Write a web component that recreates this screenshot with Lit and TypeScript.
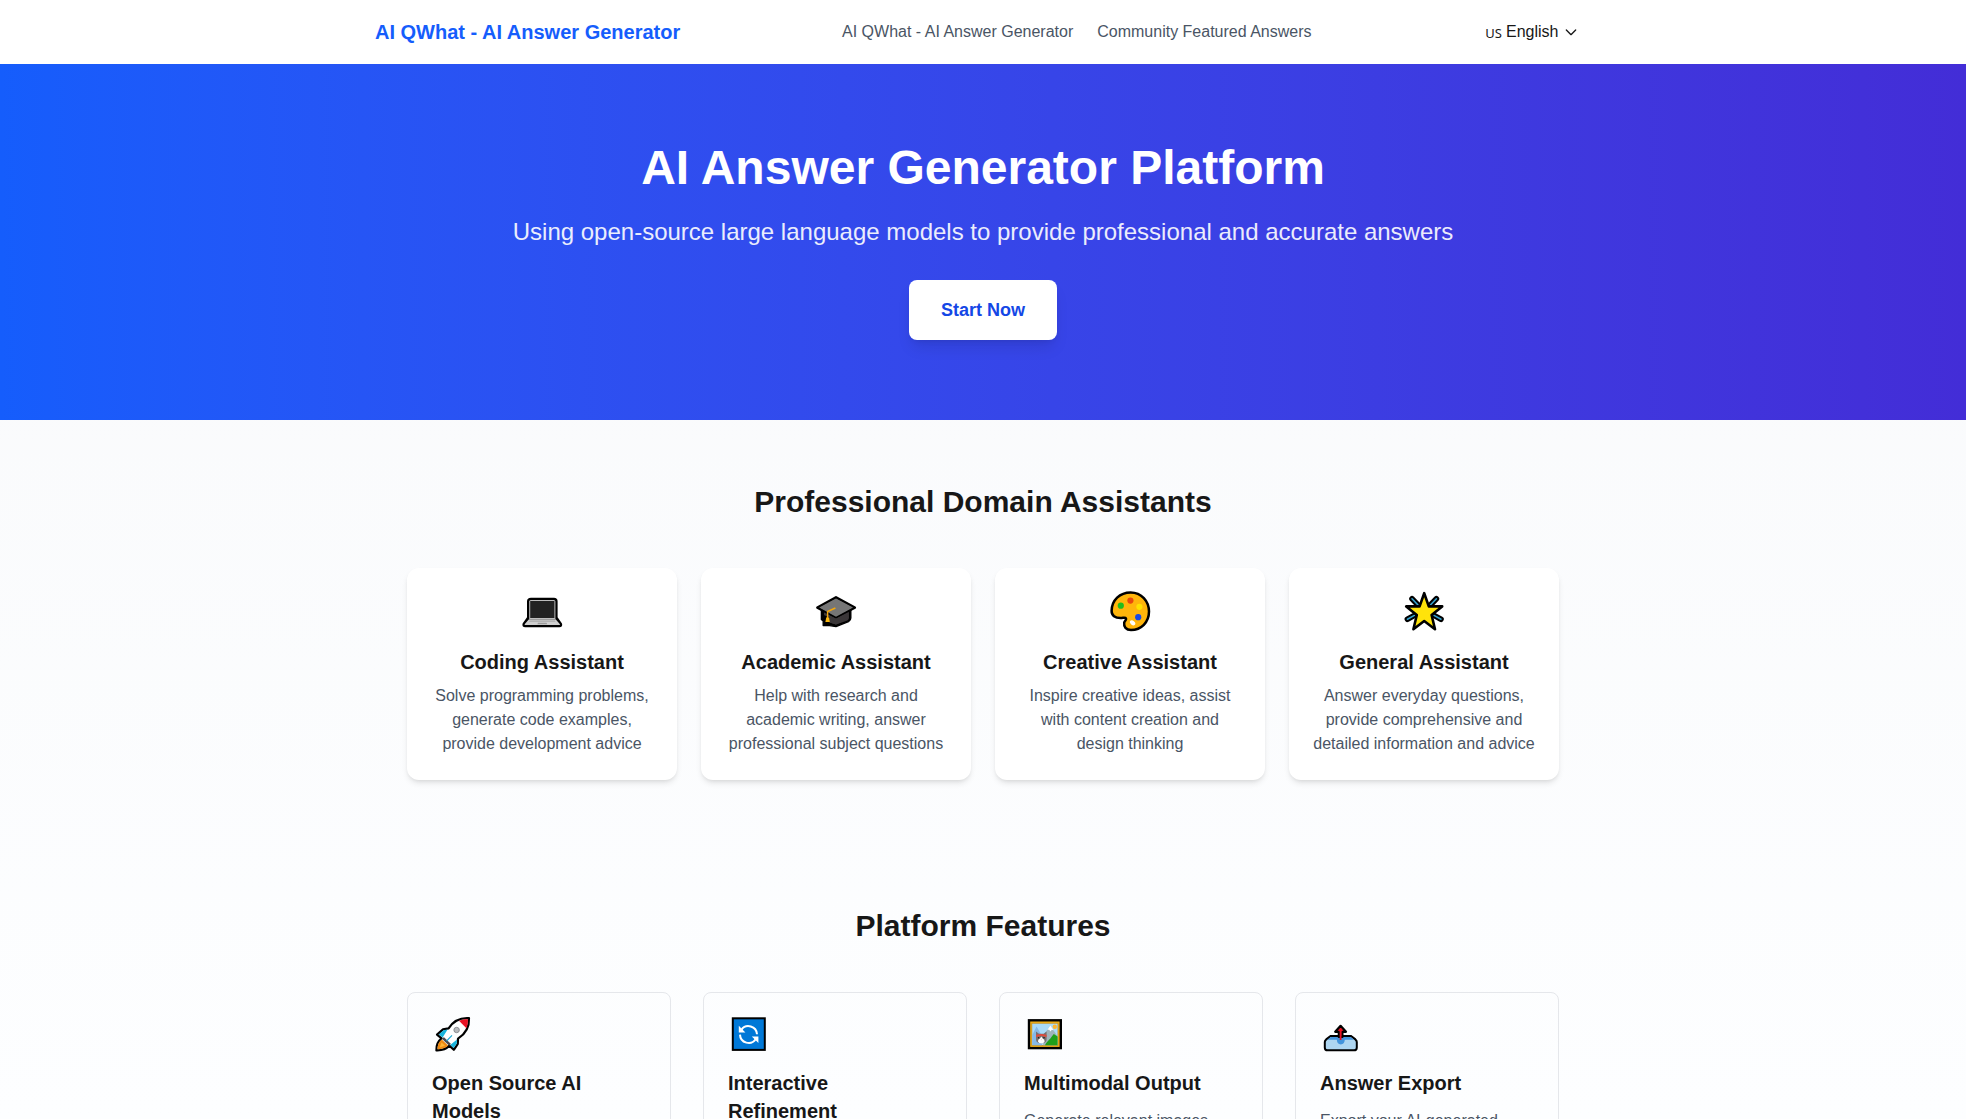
import { LitElement, html, svg, css, SVGTemplateResult } from "lit";
import { customElement } from "lit/decorators.js";

interface Item {
  icon: SVGTemplateResult;
  title: string;
  text?: string;
}

const laptop = svg`
  <path d="M13 5.7H36Q39.6 5.7 39.6 9.3V25.2L44 31.6Q45 35.3 41.4 35.3H7.2Q3.6 35.3 4.6 31.6L9 25.2V9.3Q9 5.7 13 5.7Z" fill="#000"/>
  <path d="M11.2 27V9.6Q11.2 8 12.8 8H35.8Q37.4 8 37.4 9.6V27Z" fill="#bdbdbd"/>
  <path d="M12.2 9H36.4V26H12.2Z" fill="#222"/>
  <path d="M11 27.2H37.6L42 32.2Q42.2 33 41.4 33H7.2Q6.4 33 6.6 32.2Z" fill="#cfcfcf"/>
  <path d="M11.8 28.4H36.8L37.6 29.8H11Z" fill="#a9a9a9"/>
  <path d="M20 30.8H28.6L29.2 32.2H19.4Z" fill="#9b9b9b"/>`;

const cap = svg`
  <path d="M9.4 18V27.5L11.2 29V33.6H17.5L24 34.6L36.5 29.6Q38.8 28.4 38.8 26V18Z" fill="#000" stroke="#000" stroke-width="1.4" stroke-linejoin="round"/>
  <path d="M12 20L24 26L36.8 19.6V26.2Q36.8 27.6 35.4 28.4L24 32.6L17.6 30.6V25L12 23Z" fill="#3a3638"/>
  <path d="M24 5.4L42.8 15.6L24 25.4L5.4 15.6Z" fill="#767676" stroke="#000" stroke-width="2.6" stroke-linejoin="round"/>
  <path d="M12 20.400L24 26.400L36.800 20V26.200L24 32.400L17.600 30.600V25L12 23Z" fill="#3a3638"/>
  <path d="M24 6.600L41 15.600L24 24.800L7.200 15.600Z" fill="#767676"/>
  <path d="M23.4 16L15.6 19.6V26" fill="none" stroke="#f2a60d" stroke-width="1.5"/>
  <path d="M14.2 25.4H17.2L17.8 30H13.4Z" fill="#fbb80f"/>`;

const palette = svg`
  <path d="M5.6 19C5.6 8 14 0.4 24.6 0.4C35.4 0.4 43 9 43 19.6C43 30.4 35.2 38 25 38C20 38 17.6 34.6 18.2 30.8C18.6 28.8 20.6 28.2 20 26.4C19.4 25 17.4 26 14.6 26C9 26 5.6 23.6 5.6 19Z" fill="#ffb50b" stroke="#000" stroke-width="2.5"/>
  <circle cx="14.8" cy="13.7" r="3.1" fill="#22bd1c"/>
  <circle cx="24.4" cy="8.6" r="3.1" fill="#e8480c"/>
  <circle cx="33.4" cy="14.8" r="3.1" fill="#ffe100"/>
  <circle cx="32.2" cy="25.2" r="3.1" fill="#1747e4"/>
  <ellipse cx="26.6" cy="30.8" rx="3" ry="2.1" fill="#fff" transform="rotate(40 26.6 30.8)"/>`;

const star = svg`
  <path d="M12 6.8L18 13M36.4 6.8L30.4 13M7.4 27.2L14.4 23.4M41 27.2L34 23.4" stroke="#000" stroke-width="5.6" stroke-linecap="round"/>
  <path d="M12 6.8L18 13M36.4 6.8L30.4 13M7.4 27.2L14.4 23.4M41 27.2L34 23.4" stroke="#35a3cf" stroke-width="1.6" stroke-linecap="round"/>
  <path d="M24.2 1.2L28.8 14.4H42.2L31.6 23L35 37.2L24.2 29L13.4 37.2L16.8 23L6.2 14.4H19.6Z" fill="#ffe30a" stroke="#000" stroke-width="2.6" stroke-linejoin="round"/>`;

const rocket = svg`
  <path d="M37 1.2C28 0.6 21 4.4 16.6 11.4L11 12.4L5 17.6L9.6 21.4C5.6 24.4 4.2 28.4 4.4 33.4C9.4 33.6 14.2 32.2 17.4 28.6L21.8 32.8L25.8 26.8L26 21.6C33.6 16.8 37.4 10.4 37 1.2Z" fill="#fff" stroke="#000" stroke-width="2.2" stroke-linejoin="round"/>
  <path d="M36 2.2C32.4 2 29.6 2.6 27 3.8L34.4 11.2C35.6 8.4 36 5.6 36 2.2Z" fill="#e81224"/>
  <path d="M15.6 12.6L11.5 13.3L6.8 17.5L10.6 20.6ZM25 22.6L18.2 28L21.6 31L24.8 26.4Z" fill="#19b4dc"/>
  <path d="M9.8 22.6L16.2 28.6C13.4 31.2 9.8 32.4 5.5 32.3C5.4 28.6 6.6 24.8 9.8 22.6Z" fill="#ef8a12"/>
  <path d="M9.6 25.6L13 28.8L7.6 30.4Z" fill="#ffb636"/>
  <path d="M9.6 21.4L12 20.2L18.8 26.8L17.2 28.8Z" fill="#4a4a4e"/>
  <path d="M14.6 24L20 18.4" stroke="#19a9d6" stroke-width="1.1"/>
  <circle cx="24.6" cy="13" r="2.7" fill="#b9babd" stroke="#8d8f93" stroke-width="1"/>`;

const refresh = svg`
  <rect x="4.8" y="1.3" width="32" height="31.6" fill="#0078d7" stroke="#000" stroke-width="2"/>
  <path d="M13.4 12.8A8.6 8.6 0 0 1 29 17.2M12 17.6A8.6 8.6 0 0 0 27.8 22" fill="none" stroke="#fff" stroke-width="2"/>
  <path d="M10.8 8.8V15.4H17.4ZM30.4 26V19.4H23.8Z" fill="#fff"/>`;

const picture = svg`
  <rect x="5" y="3.3" width="31.8" height="27.8" fill="#f5b316" stroke="#000" stroke-width="2.4"/>
  <rect x="7.8" y="6.2" width="26.2" height="22.4" fill="#a9daf8" stroke="#c98a10" stroke-width="0.8"/>
  <circle cx="30.8" cy="9.8" r="2.2" fill="#ffb52e"/>
  <path d="M8.2 28.2V18L12.6 9.6L18 19V28.2Z" fill="#86b9e6"/>
  <path d="M19 28.2L21 16L26.4 8.8L33.4 19V28.2Z" fill="#9fb4bb"/>
  <path d="M23.4 12.8L26.4 8.6L29.6 13.2L27.8 12.8L26.4 14.4L25.2 12.8Z" fill="#fff"/>
  <path d="M21 28.2C23 24 26 22.600 27.600 19.800L29.800 17L33.600 19.600V28.200Z" fill="#1fa01a"/>
  <path d="M12 14.6L15 16.8H19.6L22.6 14.6V22.4Q22.6 26.2 17.3 26.2Q12 26.2 12 22.4Z" fill="#77706f"/>
  <path d="M12 17.8L17.3 17L22.6 17.8V20L17.3 18.8L12 20Z" fill="#e04a3c"/>
  <circle cx="14.6" cy="20.8" r="0.8" fill="#1a1a1a"/>
  <circle cx="20" cy="20.8" r="0.8" fill="#1a1a1a"/>
  <path d="M17.3 19.400L18.600 21.600Q21 22.600 20.600 24.800Q19.600 26.600 17.300 26.600Q15 26.600 14 24.800Q13.600 22.600 16 21.600Z" fill="#fff"/>
  <path d="M16.700 22.400H17.900L17.300 23.200Z" fill="#d77"/>`;

const tray = svg`
  <path d="M10.6 19H31L35.4 22.4Q36.8 23.6 36.8 25V30.4Q36.8 33.3 33.9 33.3H7.7Q4.8 33.3 4.8 30.4V25Q4.8 23.6 6.2 22.4Z" fill="#aed6f1" stroke="#000" stroke-width="2"/>
  <path d="M11 20H30.6L34 22.8H24.8Q24.4 27.4 20.8 27.4Q17.2 27.4 16.8 22.8H7.4Z" fill="#4394dc"/>
  <path d="M20.6 8.8L26 14.8H22.4V20H18.8V14.8H15.2Z" fill="#e81224" stroke="#000" stroke-width="2.2" stroke-linejoin="round"/>
  <path d="M20.6 13V23" stroke="#e81224" stroke-width="1.8"/>`;

const assistants: Item[] = [
  { icon: laptop, title: "Coding Assistant", text: "Solve programming problems, generate code examples, provide development advice" },
  { icon: cap, title: "Academic Assistant", text: "Help with research and academic writing, answer professional subject questions" },
  { icon: palette, title: "Creative Assistant", text: "Inspire creative ideas, assist with content creation and design thinking" },
  { icon: star, title: "General Assistant", text: "Answer everyday questions, provide comprehensive and detailed information and advice" },
];

const features: Item[] = [
  { icon: rocket, title: "Open Source AI Models" },
  { icon: refresh, title: "Interactive Refinement" },
  { icon: picture, title: "Multimodal Output", text: "Generate relevant images" },
  { icon: tray, title: "Answer Export", text: "Export your AI-generated" },
];

@customElement("app-root")
export class AppRoot extends LitElement {
  static styles = css`
    :host {
      display: block;
      height: 100vh;
      overflow: hidden;
      background: linear-gradient(to bottom, #f8f9fb, #fdfeff);
      color: #171717;
      font-family: "Liberation Sans", Arial, sans-serif;
      font-size: 16px;
      line-height: 24px;
    }
    * {
      box-sizing: border-box;
    }
    h1, h2, h3, p {
      margin: 0;
    }
    a {
      color: inherit;
      text-decoration: none;
    }
    .header {
      background: #fff;
    }
    .bar {
      display: flex;
      align-items: center;
      justify-content: space-between;
      max-width: 1280px;
      height: 64px;
      margin: 0 auto;
      padding: 0 32px;
    }
    .brand {
      color: #155dfc;
      font-size: 20px;
      font-weight: 700;
      line-height: 28px;
    }
    .nav {
      display: flex;
      gap: 24px;
      color: #4a5565;
    }
    .lang {
      display: flex;
      align-items: center;
      gap: 4px;
      padding: 8px 12px;
    }
    .region {
      font-family: "Noto Sans", sans-serif;
      font-size: 13px;
      padding-top: 2px;
    }
    .picker {
      display: grid;
      align-items: center;
    }
    .select {
      grid-area: 1 / 1;
      appearance: none;
      margin: 0;
      padding: 0 20px 0 0;
      border: 0;
      background: none;
      color: inherit;
      font: inherit;
      cursor: pointer;
    }
    .chevron {
      grid-area: 1 / 1;
      justify-self: end;
      width: 16px;
      height: 16px;
      pointer-events: none;
    }
    .hero {
      display: flex;
      flex-direction: column;
      align-items: center;
      padding: 80px 32px;
      background: linear-gradient(in oklab to right, #155dfc, #432dd7);
      color: #fff;
      text-align: center;
    }
    .hero-title {
      font-size: 48px;
      line-height: 48px;
      margin-bottom: 24px;
    }
    .hero-text {
      font-size: 24px;
      line-height: 32px;
      margin-bottom: 32px;
      opacity: 0.9;
    }
    .start {
      padding: 16px 32px;
      border: 0;
      border-radius: 8px;
      background: #fff;
      color: #1447e6;
      font: inherit;
      font-size: 18px;
      font-weight: 700;
      line-height: 28px;
      box-shadow: 0 10px 15px -3px rgb(0 0 0 / 0.1), 0 4px 6px -4px rgb(0 0 0 / 0.1);
      cursor: pointer;
    }
    .section {
      padding: 64px 32px;
    }
    .section-title {
      font-size: 30px;
      line-height: 36px;
      margin-bottom: 48px;
      text-align: center;
    }
    .grid {
      display: grid;
      grid-template-columns: repeat(4, minmax(0, 1fr));
      gap: 24px;
      max-width: 1152px;
      margin: 0 auto;
    }
    .wide {
      gap: 32px;
    }
    .card {
      padding: 24px;
      border-radius: 12px;
      background: #fff;
      box-shadow: 0 4px 6px -1px rgb(0 0 0 / 0.1), 0 2px 4px -2px rgb(0 0 0 / 0.1);
      text-align: center;
    }
    .feature {
      padding: 24px;
      border: 1px solid #e5e7eb;
      border-radius: 8px;
    }
    .icon {
      display: block;
      width: 48px;
      height: 40px;
      margin: 0 auto 16px;
      overflow: visible;
    }
    .small-icon {
      display: block;
      width: 40px;
      height: 36px;
      margin-bottom: 16px;
      overflow: visible;
    }
    .item-title {
      font-size: 20px;
      line-height: 28px;
    }
    .item-text {
      margin-top: 8px;
      color: #4a5565;
    }
    .feature .item-text {
      margin-top: 12px;
    }
  `;

  render() {
    return html`
      <header class="header">
        <div class="bar">
          <a class="brand" href="#">AI QWhat - AI Answer Generator</a>
          <nav class="nav">
            <a href="#">AI QWhat - AI Answer Generator</a>
            <a href="#">Community Featured Answers</a>
          </nav>
          <div class="lang">
            <label class="region" for="language">US</label>
            <div class="picker">
              <select class="select" id="language">
                <option>English</option>
              </select>
              <svg class="chevron" viewBox="0 0 24 24" fill="none" stroke="currentColor" stroke-width="2" stroke-linecap="round" stroke-linejoin="round" aria-hidden="true">
                <path d="M19 9l-7 7-7-7" />
              </svg>
            </div>
          </div>
        </div>
      </header>
      <main>
        <section class="hero">
          <h1 class="hero-title">AI Answer Generator Platform</h1>
          <p class="hero-text">Using open-source large language models to provide professional and accurate answers</p>
          <button class="start" type="button">Start Now</button>
        </section>
        <section class="section">
          <h2 class="section-title">Professional Domain Assistants</h2>
          <div class="grid">
            ${assistants.map(
              (a) => html`
                <article class="card">
                  <svg class="icon" viewBox="0 0 48 40" aria-hidden="true">${a.icon}</svg>
                  <h3 class="item-title">${a.title}</h3>
                  <p class="item-text">${a.text}</p>
                </article>
              `
            )}
          </div>
        </section>
        <section class="section">
          <h2 class="section-title">Platform Features</h2>
          <div class="grid wide">
            ${features.map(
              (f) => html`
                <article class="feature">
                  <svg class="small-icon" viewBox="0 0 40 36" aria-hidden="true">${f.icon}</svg>
                  <h3 class="item-title">${f.title}</h3>
                  ${f.text ? html`<p class="item-text">${f.text}</p>` : null}
                </article>
              `
            )}
          </div>
        </section>
      </main>
    `;
  }
}
